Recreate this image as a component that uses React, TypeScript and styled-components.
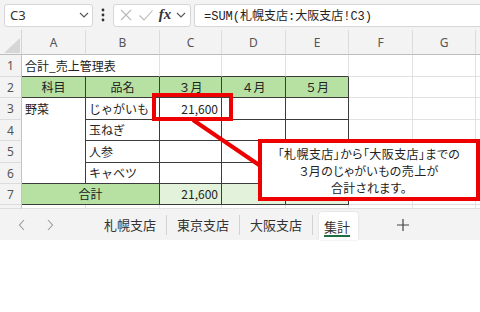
import React from 'react';
import styled, { createGlobalStyle } from 'styled-components';

const GlobalStyle = createGlobalStyle`
  html, body { margin: 0; padding: 0; background: #fff; }
  body { font-family: "Noto Sans CJK JP", "Noto Sans", sans-serif; }
`;

const COLS = [22, 64, 74, 62, 64, 63, 64, 63];
const ROWS = [25, 22, 21, 22, 21, 22, 21, 21, 4];
const LETTERS = ['A', 'B', 'C', 'D', 'E', 'F', 'G', ''];

const GRID = '#e1e1e1';
const DARK = '#3c3c3c';
const GREEN = '#b7e1a3';
const LIGHT_GREEN = '#e3f2da';
const RED = '#ee0000';

type Align = 'left' | 'center' | 'right';

interface CellText {
    text: string;
    align: Align;
}

const texts: Record<string, CellText> = {
    '1,1': { text: '合計_売上管理表', align: 'left' },
    '2,1': { text: '科目', align: 'center' },
    '2,2': { text: '品名', align: 'center' },
    '2,3': { text: '３月', align: 'center' },
    '2,4': { text: '４月', align: 'center' },
    '2,5': { text: '５月', align: 'center' },
    '3,1': { text: '野菜', align: 'left' },
    '3,2': { text: 'じゃがいも', align: 'left' },
    '3,3': { text: '21,600', align: 'right' },
    '4,2': { text: '玉ねぎ', align: 'left' },
    '5,2': { text: '人参', align: 'left' },
    '6,2': { text: 'キャベツ', align: 'left' },
    '7,1': { text: '合計', align: 'center' },
    '7,3': { text: '21,600', align: 'right' },
};

// merged ranges: key -> [rowSpan, colSpan]
const merges: Record<string, [number, number]> = {
    '1,1': [1, 2],
    '3,1': [4, 1],
    '7,1': [1, 2],
};

const covered = new Set(['1,2', '4,1', '5,1', '6,1', '7,2']);

const inTable = (r: number, c: number) => r >= 2 && r <= 7 && c >= 1 && c <= 5;

const cellBg = (r: number, c: number) => {
    if (r === 2 && c <= 5) return GREEN;
    if (r === 7 && c <= 2) return GREEN;
    if (r === 7 && c >= 3 && c <= 5) return LIGHT_GREEN;
    return '#fff';
};

const App: React.FC = () => {
    const cells: React.ReactNode[] = [];
    for (let r = 1; r <= 8; r++) {
        cells.push(
            <RowHead key={`h${r}`} style={{ gridRow: r + 1 }}>
                {r < 8 ? r : ''}
            </RowHead>
        );
        for (let c = 1; c <= 8; c++) {
            const key = `${r},${c}`;
            if (covered.has(key)) continue;
            const [rs, cs] = merges[key] || [1, 1];
            const t = texts[key];
            const dark = inTable(r, c);
            cells.push(
                <Cell
                    key={key}
                    $row={r + 1}
                    $col={c + 1}
                    $rowSpan={rs}
                    $colSpan={cs}
                    $bg={cellBg(r, c)}
                    $right={dark ? DARK : GRID}
                    $bottom={dark || (r === 1 && c <= 5) ? DARK : GRID}
                    $align={t ? t.align : 'left'}
                    $top={rs > 1}
                >
                    {t ? t.text : ''}
                </Cell>
            );
        }
    }

    return (
        <Page>
            <GlobalStyle />
            <Toolbar>
                <NameBox>
                    <span>C3</span>
                    <Chevron />
                </NameBox>
                <Dots viewBox="0 0 4 14" width="4" height="14">
                    <circle cx="2" cy="2" r="1.4" />
                    <circle cx="2" cy="7" r="1.4" />
                    <circle cx="2" cy="12" r="1.4" />
                </Dots>
                <ActionBox>
                    <svg width="14" height="14" viewBox="0 0 14 14">
                        <path d="M2 2 L12 12 M12 2 L2 12" stroke="#b8b8b8" strokeWidth="1.1" fill="none" />
                    </svg>
                    <svg width="16" height="14" viewBox="0 0 16 14">
                        <path d="M1.5 7.5 L6 12 L14.5 2.5" stroke="#b8b8b8" strokeWidth="1.1" fill="none" />
                    </svg>
                    <Fx>fx</Fx>
                    <Chevron />
                </ActionBox>
                <FormulaBox>=SUM(札幌支店:大阪支店!C3)</FormulaBox>
            </Toolbar>

            <Sheet>
                <Corner>
                    <svg width="16" height="15" viewBox="0 0 16 15">
                        <path d="M16 0 L16 15 L0 15 Z" fill="#d6d6d6" />
                    </svg>
                </Corner>
                {LETTERS.map((l, i) => (
                    <ColHead key={i} style={{ gridColumn: i + 2 }}>
                        {l}
                    </ColHead>
                ))}
                {cells}
            </Sheet>

            <TabBar>
                <NavArrow>
                    <svg width="8" height="12" viewBox="0 0 8 12">
                        <path d="M6 1 L1.5 6 L6 11" stroke="#9a9a9a" strokeWidth="1.1" fill="none" />
                    </svg>
                </NavArrow>
                <NavArrow>
                    <svg width="8" height="12" viewBox="0 0 8 12">
                        <path d="M2 1 L6.5 6 L2 11" stroke="#9a9a9a" strokeWidth="1.1" fill="none" />
                    </svg>
                </NavArrow>
                <Tabs>
                    <Tab>札幌支店</Tab>
                    <Sep />
                    <Tab>東京支店</Tab>
                    <Sep />
                    <Tab>大阪支店</Tab>
                    <Sep />
                    <ActiveTab>
                        <span>集計</span>
                    </ActiveTab>
                </Tabs>
                <AddTab>
                    <svg width="12" height="12" viewBox="0 0 12 12">
                        <path d="M6 0 V12 M0 6 H12" stroke="#444" strokeWidth="1.2" fill="none" />
                    </svg>
                </AddTab>
            </TabBar>

            <Overlay width="480" height="240" viewBox="0 0 480 240">
                <rect x="154" y="95" width="77" height="24" stroke={RED} strokeWidth="4" fill="none" />
                <line x1="193" y1="120" x2="262" y2="167" stroke={RED} strokeWidth="4" />
            </Overlay>
            <Callout>
                <CalloutLine>「札幌支店」から「大阪支店」までの</CalloutLine>
                <CalloutLine>３月のじゃがいもの売上が</CalloutLine>
                <CalloutLine>合計されます。</CalloutLine>
            </Callout>
        </Page>
    );
};

export default App;

const Chevron: React.FC = () => (
    <ChevronSvg width="10" height="6" viewBox="0 0 10 6">
        <path d="M1 1 L5 5 L9 1" stroke="#555" strokeWidth="1.1" fill="none" />
    </ChevronSvg>
);

const Page = styled.div`
    position: relative;
    width: 480px;
    height: 312px;
    background: #fff;
    overflow: hidden;
`;

const Toolbar = styled.div`
    display: flex;
    align-items: center;
    height: 30px;
    padding: 0 0 0 4px;
    box-sizing: border-box;
    background: #f3f3f3;
`;

const Box = styled.div`
    display: flex;
    align-items: center;
    height: 23px;
    box-sizing: border-box;
    background: #fff;
    border: 1px solid #d6d6d6;
    border-radius: 3px;
`;

const NameBox = styled(Box)`
    width: 89px;
    justify-content: space-between;
    padding: 0 3px 0 5px;
    font-family: "Noto Sans", sans-serif;
    font-size: 13px;
    color: #333;
`;

const ChevronSvg = styled.svg`
    flex: none;
`;

const Dots = styled.svg`
    fill: #333;
    margin: 0 8px 0 8px;
`;

const ActionBox = styled(Box)`
    width: 78px;
    padding: 0 4px 0 5px;
    justify-content: space-between;
`;

const Fx = styled.span`
    font-family: "Liberation Serif", serif;
    font-style: italic;
    font-weight: bold;
    font-size: 15px;
    color: #333;
    margin-top: -2px;
`;

const FormulaBox = styled(Box)`
    flex: 1;
    margin-left: 3px;
    padding-left: 9px;
    border-right: none;
    border-radius: 3px 0 0 3px;
    font-family: "Liberation Mono", "Noto Sans CJK JP", monospace;
    font-size: 12px;
    color: #222;
    white-space: nowrap;
`;

const Sheet = styled.div`
    display: grid;
    grid-template-columns: ${COLS.map((w) => `${w}px`).join(' ')} 1fr;
    grid-template-rows: ${ROWS.map((h) => `${h}px`).join(' ')};
    font-size: 12px;
    color: #222;
`;

const Corner = styled.div`
    grid-row: 1;
    grid-column: 1;
    display: flex;
    align-items: flex-end;
    justify-content: flex-end;
    padding: 0 1px 1px 0;
    box-sizing: border-box;
    background: #f3f3f3;
    border-right: 1px solid #d4d4d4;
    border-bottom: 1px solid #bdbdbd;
`;

const ColHead = styled.div`
    grid-row: 1;
    display: flex;
    align-items: center;
    justify-content: center;
    box-sizing: border-box;
    background: #f3f3f3;
    border-right: 1px solid #dcdcdc;
    border-bottom: 1px solid #bdbdbd;
    font-family: "Noto Sans", sans-serif;
    font-size: 12px;
    color: #555;
`;

const RowHead = styled.div`
    grid-column: 1;
    display: flex;
    align-items: center;
    justify-content: center;
    box-sizing: border-box;
    background: #f3f3f3;
    border-right: 1px solid #c4c4c4;
    border-bottom: 1px solid #dcdcdc;
    font-family: "Noto Sans", sans-serif;
    font-size: 12px;
    color: #555;
`;

const justify = { left: 'flex-start', center: 'center', right: 'flex-end' };

const Cell = styled.div<{
    $row: number;
    $col: number;
    $rowSpan: number;
    $colSpan: number;
    $bg: string;
    $right: string;
    $bottom: string;
    $align: Align;
    $top: boolean;
}>`
    grid-row: ${(p) => p.$row} / span ${(p) => p.$rowSpan};
    grid-column: ${(p) => p.$col} / span ${(p) => p.$colSpan};
    display: flex;
    align-items: ${(p) => (p.$top ? 'flex-start' : 'center')};
    justify-content: ${(p) => justify[p.$align]};
    padding: ${(p) => (p.$top ? '2px 3px 0' : '0 3px')};
    line-height: 18px;
    box-sizing: border-box;
    background: ${(p) => p.$bg};
    border-right: 1px solid ${(p) => p.$right};
    border-bottom: 1px solid ${(p) => p.$bottom};
    white-space: nowrap;
    overflow: hidden;
`;

const TabBar = styled.div`
    display: flex;
    align-items: stretch;
    height: 31px;
    background: #f3f3f3;
    font-size: 13px;
    color: #333;
`;

const NavArrow = styled.div`
    display: flex;
    align-items: center;
    justify-content: center;
    width: 28px;
    &:first-child {
        margin-left: 8px;
    }
`;

const Tabs = styled.div`
    display: flex;
    align-items: center;
    margin-left: 30px;
`;

const Tab = styled.div`
    display: flex;
    align-items: center;
    padding: 0 10px;
    height: 100%;
`;

const Sep = styled.div`
    width: 1px;
    height: 20px;
    background: #d2d2d2;
`;

const ActiveTab = styled.div`
    display: flex;
    align-items: center;
    align-self: flex-end;
    height: 28px;
    margin-left: 6px;
    padding: 0 8px 0 5px;
    background: #fff;
    border-radius: 3px 3px 0 0;
    box-shadow: 0 0 2px rgba(0, 0, 0, 0.15);
    span {
        border-bottom: 2px solid #1e6e43;
        line-height: 17px;
        margin-top: 2px;
    }
`;

const AddTab = styled.div`
    display: flex;
    align-items: center;
    margin-left: 39px;
`;

const Overlay = styled.svg`
    position: absolute;
    top: 0;
    left: 0;
    pointer-events: none;
`;

const Callout = styled.div`
    position: absolute;
    left: 258px;
    top: 139px;
    width: 222px;
    height: 62px;
    box-sizing: border-box;
    border: 4px solid ${RED};
    background: #fff;
    display: flex;
    flex-direction: column;
    justify-content: center;
    align-items: center;
    font-size: 12px;
    letter-spacing: 0.4px;
    color: #222;
    font-feature-settings: "palt";
    white-space: nowrap;
`;

const CalloutLine = styled.div`
    height: 17px;
    line-height: 17px;
`;
